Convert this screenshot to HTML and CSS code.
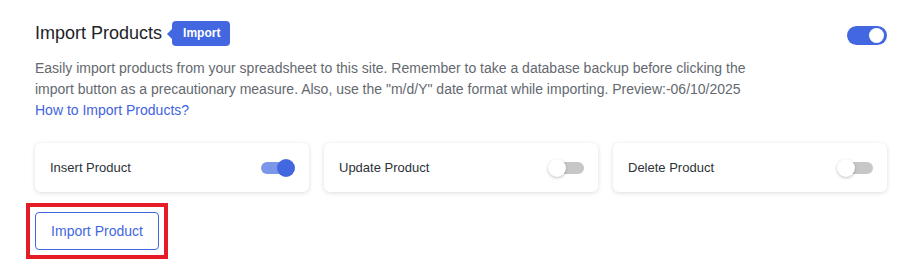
FILE: index.html
```html
<!DOCTYPE html>
<html>
<head>
<meta charset="utf-8">
<link rel="stylesheet" href="styles.css">
</head>
<body>
<div class="panel">
  <div class="head">
    <div class="title-wrap">
      <h2 class="title">Import Products</h2>
      <span class="badge">Import</span>
    </div>
    <span class="toggle big on"><span class="knob"></span></span>
  </div>
  <p class="desc">Easily import products from your spreadsheet to this site. Remember to take a database backup before clicking the import button as a precautionary measure. Also, use the "m/d/Y" date format while importing. Preview:-06/10/2025<br><a class="link" href="#">How to Import Products?</a></p>
  <div class="cards">
    <div class="card"><span class="card-label">Insert Product</span><span class="toggle sm on"><span class="knob"></span></span></div>
    <div class="card"><span class="card-label">Update Product</span><span class="toggle sm off"><span class="knob"></span></span></div>
    <div class="card"><span class="card-label">Delete Product</span><span class="toggle sm off"><span class="knob"></span></span></div>
  </div>
  <div class="actions">
    <div class="highlight"><button class="btn">Import Product</button></div>
  </div>
</div>
</body>
</html>
```

FILE: styles.css
```css
* { box-sizing: border-box; }
html, body { margin: 0; padding: 0; background: #fff; }
body { font-family: "Liberation Sans", Arial, sans-serif; min-height: 276px; }

.panel {
  width: 924px;
  padding: 21px 37px 17px 35px;
}

.head {
  display: flex;
  justify-content: space-between;
  align-items: center;
  height: 25px;
}
.title-wrap { display: flex; align-items: center; }
.title {
  margin: 0;
  font-size: 18px;
  font-weight: 400;
  color: #1d2327;
  line-height: 25px;
}
.badge {
  position: relative;
  margin-left: 10px;
  height: 25px;
  line-height: 25px;
  padding: 0 10px 0 11px;
  background: #4267e0;
  color: #fff;
  font-size: 12px;
  font-weight: 700;
  border-radius: 4px;
}
.badge::before {
  content: "";
  position: absolute;
  left: -5px;
  top: 8px;
  border-top: 5px solid transparent;
  border-bottom: 5px solid transparent;
  border-right: 5px solid #4267e0;
}

.toggle { position: relative; display: inline-block; }
.toggle.big {
  width: 40px;
  height: 19px;
  border-radius: 10px;
  background: #4267e0;
  margin-top: 4px;
}
.toggle.big .knob {
  position: absolute;
  right: 3px;
  top: 2px;
  width: 15px;
  height: 15px;
  border-radius: 50%;
  background: #fff;
}

.desc {
  margin: 12px 0 0;
  max-width: 720px;
  font-size: 14px;
  line-height: 21px;
  color: #646970;
}
.link { color: #3f63e0; text-decoration: none; }

.cards {
  display: grid;
  grid-template-columns: repeat(3, 1fr);
  gap: 15px;
  margin-top: 22px;
}
.card {
  height: 49px;
  display: flex;
  align-items: center;
  justify-content: space-between;
  padding: 0 14px 0 15px;
  background: #fff;
  border-radius: 6px;
  box-shadow: 0 1px 4px rgba(30, 40, 70, 0.16);
}
.card-label { font-size: 13px; color: #2c3338; }

.toggle.sm { width: 36px; height: 18px; }
.toggle.sm::before {
  content: "";
  position: absolute;
  left: 2px;
  right: 0;
  top: 3px;
  height: 12px;
  border-radius: 6px;
}
.toggle.sm .knob {
  position: absolute;
  top: 0;
  width: 18px;
  height: 18px;
  border-radius: 50%;
}
.toggle.sm.on::before { background: #7b97ea; right: 2px; }
.toggle.sm.on .knob { right: 0; background: #4267e0; }
.toggle.sm.off::before { background: #c7c7c7; }
.toggle.sm.off .knob { left: 0; background: #fff; box-shadow: 0 1px 3px rgba(0,0,0,0.25); }

.actions { margin-top: 11px; margin-left: -9px; }
.highlight {
  display: inline-block;
  padding: 5px;
  border: 4px solid #e41c25;
}
.btn {
  display: block;
  height: 38px;
  width: 124px;
  padding: 0;
  font-family: "Liberation Sans", Arial, sans-serif;
  font-size: 14px;
  color: #4267e0;
  background: #fff;
  border: 1px solid #4267e0;
  border-radius: 4px;
}
```
